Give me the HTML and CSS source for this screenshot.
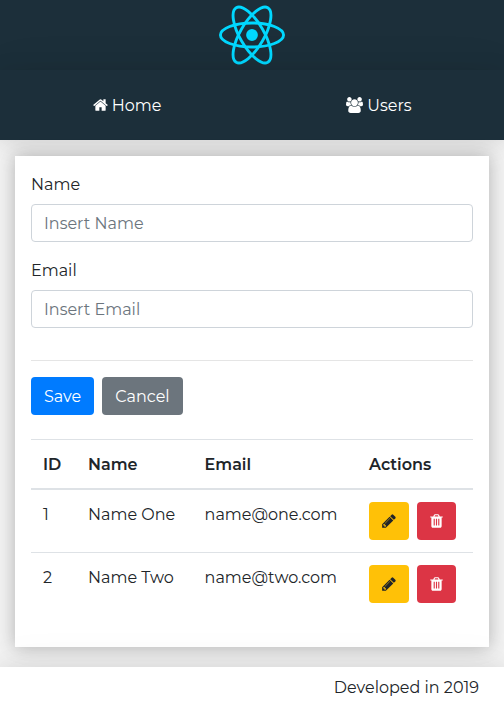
FILE: index.html
```html
<!DOCTYPE html>
<html lang="en">
<head>
<meta charset="utf-8">
<title>Users</title>
<link rel="stylesheet" href="styles.css">
</head>
<body>
<svg class="defs" width="0" height="0">
  <symbol id="pencil" viewBox="128 0 1536 1792"><path d="M491 1536l91-91-235-235-91 91v107h128v128h107zm523-928q0-22-22-22-10 0-17 7l-542 542q-7 7-7 17 0 22 22 22 10 0 17-7l542-542q7-7 7-17zm-54-192l416 416-832 832h-416v-416zm683 96q0 53-37 90l-166 166-416-416 166-165q36-38 90-38 53 0 91 38l235 234q37 39 37 91z"/></symbol>
  <symbol id="trash" viewBox="192 0 1408 1792"><path d="M704 1376v-704q0-14-9-23t-23-9h-64q-14 0-23 9t-9 23v704q0 14 9 23t23 9h64q14 0 23-9t9-23zm256 0v-704q0-14-9-23t-23-9h-64q-14 0-23 9t-9 23v704q0 14 9 23t23 9h64q14 0 23-9t9-23zm256 0v-704q0-14-9-23t-23-9h-64q-14 0-23 9t-9 23v704q0 14 9 23t23 9h64q14 0 23-9t9-23zm-544-992h448l-48-117q-7-9-17-11h-317q-10 2-17 11zm928 32v64q0 14-9 23t-23 9h-96v948q0 83-47 143.5t-113 60.5h-832q-66 0-113-58.5t-47-141.5v-952h-96q-14 0-23-9t-9-23v-64q0-14 9-23t23-9h309l70-167q15-37 54-63t79-26h320q40 0 79 26t54 63l70 167h309q14 0 23 9t9 23z"/></symbol>
</svg>
<header class="logo">
  <svg width="66" height="60" viewBox="-11.5 -10.45 23 20.9" fill="none" stroke="#00d8ff">
    <circle r="2.05" fill="#00d8ff" stroke="none"/>
    <ellipse rx="11" ry="4.2"/>
    <ellipse rx="11" ry="4.2" transform="rotate(60)"/>
    <ellipse rx="11" ry="4.2" transform="rotate(120)"/>
  </svg>
</header>
<nav class="menu">
  <a class="home"><svg width="15" height="16" viewBox="64 0 1664 1792"><path d="M1472 992v480q0 26-19 45t-45 19h-384v-384h-256v384h-384q-26 0-45-19t-19-45v-480q0-1 .5-3t.5-3l575-474 575 474q1 2 1 6zm223-69l-62 74q-8 9-21 11h-3q-13 0-21-7l-692-577-692 577q-12 8-24 7-13-2-21-11l-62-74q-8-10-7-23.5t11-21.5l719-599q32-26 76-26t76 26l244 204v-195q0-14 9-23t23-9h192q14 0 23 9t9 23v408l219 182q10 8 11 21.5t-7 23.5z"/></svg><span>Home</span></a>
  <a class="users"><svg width="17" height="16" viewBox="0 0 1920 1792"><path d="M593 896q-162 5-265 128h-134q-82 0-138-40.5t-56-118.5q0-353 124-353 6 0 43.5 21t97.5 42.5 119 21.5q67 0 133-23-5 37-5 66 0 139 81 256zm1071 637q0 120-73 189.5t-194 69.5h-874q-121 0-194-69.5t-73-189.5q0-53 3.5-103.5t14-109 26.5-108.5 43-97.5 62-81 85.5-53.5 111.5-20q10 0 43 21.5t73 48 107 48 135 21.5 135-21.5 107-48 73-48 43-21.5q61 0 111.5 20t85.5 53.5 62 81 43 97.5 26.5 108.5 14 109 3.5 103.5zm-1024-1277q0 106-75 181t-181 75-181-75-75-181 75-181 181-75 181 75 75 181zm704 384q0 159-112.5 271.5t-271.5 112.5-271.5-112.5-112.5-271.5 112.5-271.5 271.5-112.5 271.5 112.5 112.5 271.5zm576 225q0 78-56 118.5t-138 40.5h-134q-103-123-265-128 81-117 81-256 0-29-5-66 66 23 133 23 59 0 119-21.5t97.5-42.5 43.5-21q124 0 124 353zm-128-609q0 106-75 181t-181 75-181-75-75-181 75-181 181-75 181 75 75 181z"/></svg><span>Users</span></a>
</nav>
<main class="content">
  <section class="card">
    <div class="field">
      <label for="name">Name</label>
      <input id="name" placeholder="Insert Name">
    </div>
    <div class="field">
      <label for="email">Email</label>
      <input id="email" placeholder="Insert Email">
    </div>
    <hr>
    <div class="actions">
      <button class="btn save">Save</button>
      <button class="btn cancel">Cancel</button>
    </div>
    <div class="table">
      <div class="row head"><span>ID</span><span>Name</span><span>Email</span><span>Actions</span></div>
      <div class="row first"><span>1</span><span>Name One</span><span>name@one.com</span>
        <div class="tools"><button class="btn edit"><svg width="14" height="16"><use href="#pencil"/></svg></button><button class="btn delete"><svg width="13" height="16"><use href="#trash"/></svg></button></div></div>
      <div class="row"><span>2</span><span>Name Two</span><span>name@two.com</span>
        <div class="tools"><button class="btn edit"><svg width="14" height="16"><use href="#pencil"/></svg></button><button class="btn delete"><svg width="13" height="16"><use href="#trash"/></svg></button></div></div>
    </div>
  </section>
</main>
<footer class="footer"><span>Developed in 2019</span></footer>
</body>
</html>
```
FILE: styles.css
```css
* { box-sizing: border-box; }
body {
  margin: 0;
  height: 707px;
  display: grid;
  grid-template-rows: 70px 70px 527px 40px;
  font: 400 16px/24px Montserrat, Inter, sans-serif;
  color: #212529;
  background: #f2f2f2;
  overflow: hidden;
}
.defs { position: absolute; }
svg { fill: currentColor; flex: none; }
.logo, .menu { background: #1c2f3a; color: #fff; }
.logo { display: flex; justify-content: center; padding-top: 5px; }
.logo svg { fill: none; }
.menu {
  display: grid;
  grid-template-columns: 1fr 1fr;
  align-items: center;
  box-shadow: 0 2px 23px rgba(0,0,0,.1), 0 2px 49px rgba(0,0,0,.06);
}
.menu a { display: flex; align-items: center; justify-content: center; gap: 4px; padding-left: 2px; }
.menu span { padding-top: 2px; }
.content { padding: 16px 15px 20px; }
.card {
  height: 491px;
  padding: 16px;
  background: #fff;
  box-shadow: 0 0 16px rgba(0,0,0,.22), 0 2px 23px rgba(0,0,0,.06);
}
.field { margin-bottom: 16px; }
label { display: block; padding-top: 1px; margin-bottom: 7px; }
input {
  display: block;
  width: 100%;
  height: 38px;
  padding: 6px 12px;
  border: 1px solid #ced4da;
  border-radius: 4px;
  font: inherit;
  background: #fff;
}
input::placeholder { color: #6c757d; opacity: 1; }
hr { margin: 32px 0 16px; border: 0; border-top: 1px solid #e5e5e5; }
.actions { display: flex; gap: 8px; margin-bottom: 24px; }
.btn {
  display: flex;
  align-items: center;
  justify-content: center;
  height: 38px;
  padding: 0;
  border: 0;
  border-radius: 4px;
  color: #fff;
  font: inherit;
}
.save { width: 63px; padding-top: 2px; background: #007bff; }
.cancel { width: 81px; padding-top: 2px; background: #6c757d; }
.row {
  display: grid;
  grid-template-columns: 45px 116.6px 164.4px 1fr;
  height: 63px;
  padding: 12px 0 0 12px;
  border-top: 1px solid #dee2e6;
  white-space: nowrap;
}
.row span { padding-top: 1px; }
.head { height: 49px; font-weight: 600; }
.first { height: 64px; border-top-width: 2px; }
.tools { display: flex; gap: 8px; }
.edit { width: 40px; background: #ffc107; color: #212529; }
.delete { width: 39px; background: #dc3545; }
.footer {
  display: flex;
  align-items: center;
  justify-content: flex-end;
  padding: 2px 25px 0 0;
  background: #fff;
  box-shadow: 0 2px 23px rgba(0,0,0,.1), 0 2px 49px rgba(0,0,0,.06);
}
```
